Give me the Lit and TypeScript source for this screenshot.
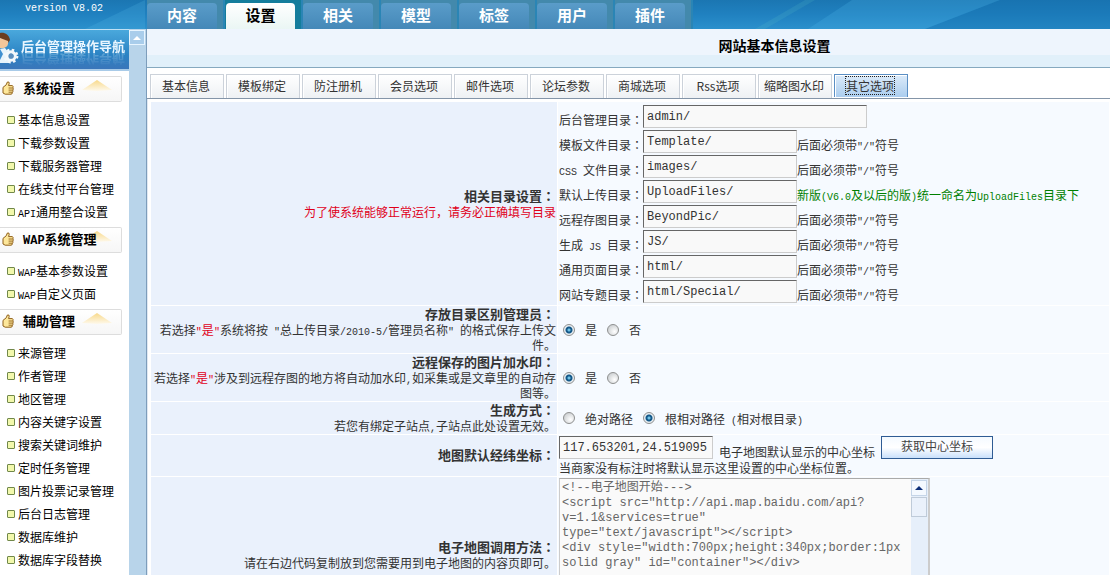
import { LitElement, html, css } from "lit";
import { customElement, property } from "lit/decorators.js";

/** Sets half-width runs and full-width colons in their own faces, so both keep the 6/12 pixel grid. */
const mix = (text: string) =>
  text
    .split(/([\x20-\x7e]+|：)/)
    .filter((p) => p)
    .map((p) =>
      p === "："
        ? html`<span class="colon">：</span>`
        : /^[\x20-\x7e]/.test(p)
          ? html`<span class="half">${p}</span>`
          : p
    );

const shared = css`
  * { box-sizing: border-box; }
  .half { font-family: "Liberation Mono", monospace; font-size: 10px; line-height: 6px; white-space: pre-wrap; }
  .colon { font-family: "Noto Sans CJK TC", sans-serif; line-height: 10px; }
  .bold .half { font-size: 12px; }
  a { color: inherit; text-decoration: none; }
`;

@customElement("admin-header")
export class AdminHeader extends LitElement {
  static styles = [
    shared,
    css`
      :host {
        display: flex; height: 29px; color: #fff; position: relative; overflow: hidden;
        background: linear-gradient(#1b76b2, #2081c0 50%, #2b90cc);
      }
      .shine { position: absolute; inset: 0; width: 100%; height: 100%; }
      .version { width: 147px; padding: 1px 0 0 25px; font: 10px/15px "Liberation Mono", monospace; position: relative; white-space: nowrap; }
      nav { display: flex; position: relative; background: #4389ac; }
      a {
        display: block; height: 26px; margin-top: 3px; border-radius: 4px 4px 0 0; text-align: center;
        font-weight: bold; font-size: 15px; line-height: 23px;
        background: linear-gradient(#5a9cc9, #4488b8);
      }
      .slot { width: 78px; border-right: 2px solid #2a85b5; padding-right: 6px; }
      .on a { color: #000; background: linear-gradient(#fff, #eaf6f4); margin-left: 1px; }
      .on { background: #147d9c; }
    `,
  ];
  render() {
    const tabs = ["内容", "设置", "相关", "模型", "标签", "用户", "插件"];
    return html`
      <svg class="shine" viewBox="0 0 1110 29" preserveAspectRatio="none" aria-hidden="true">
        <path d="M925 29 1000 0H1110V29Z" fill="#1470ae" opacity=".35" />
        <path d="M808 29 852 0H1000L925 29Z" fill="#4bb4e6" opacity=".25" />
        <path d="M755 29 805 0H815L765 29Z" fill="#6cc" opacity=".15" />
        <path d="M85 29 145 0V29Z" fill="#5cc0ea" opacity=".2" />
      </svg>
      <div class="version">version V8.02</div>
      <nav>
        ${tabs.map((t) => html`<div class="slot ${t === "设置" ? "on" : ""}"><a href="#">${t}</a></div>`)}
      </nav>
    `;
  }
}

@customElement("side-menu")
export class SideMenu extends LitElement {
  static styles = [
    shared,
    css`
      :host { display: flex; width: 146px; flex: none; overflow: hidden; background: #b8d4ea; border-right: 1px solid #7d9dbb; }
      .panel { width: 129px; background: #fff; overflow: hidden; }
      .banner {
        height: 42px; display: flex; align-items: flex-start; position: relative; border-top: 1px solid #bfe0f4; overflow: hidden;
        background: linear-gradient(#4aa8dc, #2b83c4 60%, #3a76ba 94%, #a9cbe8 96%);
      }
      .banner svg { flex: none; width: 20px; height: 38px; }
      .banner strong {
        color: #e9f6ff; font-size: 13px; line-height: 15px; margin: 8px 0 0 1px; white-space: nowrap; font-weight: bold;
        -webkit-box-reflect: below -1px linear-gradient(transparent, rgba(0, 0, 0, 0.3));
      }
      h2 {
        display: flex; align-items: center; margin: 0 7px 0 0; height: 26px; font-size: 13px; line-height: 22px; padding-bottom: 2px; color: #000;
        border: 1px solid #ddd; border-left: 0; border-radius: 0 2px 2px 0; background: linear-gradient(#fff, #f6f6f6);
        position: relative;
      }
      h2 .thumb { width: 12px; height: 14px; margin-right: 9px; margin-left: 2px; }
      h2 span { position: relative; z-index: 1; }
      h2 .up { position: absolute; left: 82px; top: 3px; width: 30px; height: 11px; }
      .groups { padding-top: 5px; }
      ul { list-style: none; margin: 0; padding: 6px 0 4px; }
      li { height: 23px; display: flex; align-items: center; white-space: nowrap; font-size: 12px; line-height: 23px; color: #000; }
      li::before { content: ""; width: 6px; height: 6px; border: 1px solid #71884a; border-radius: 1px; background: #f2f8ac; margin: 1px 4px 0 7px; flex: none; }
      li a { margin-left: -1px; }
      .rail { flex: 1; padding-top: 1px; }
      .rail button { display: block; width: 16px; height: 15px; padding: 0; border: 1px solid #e8f5ff; background: #a9cdeb; }
      .rail svg { display: block; margin: auto; }
    `,
  ];
  render() {
    const groups: [string, string[]][] = [
      ["系统设置", ["基本信息设置", "下载参数设置", "下载服务器管理", "在线支付平台管理", "API通用整合设置"]],
      ["WAP系统管理", ["WAP基本参数设置", "WAP自定义页面"]],
      ["辅助管理", ["来源管理", "作者管理", "地区管理", "内容关键字设置", "搜索关键词维护", "定时任务管理", "图片投票记录管理", "后台日志管理", "数据库维护", "数据库字段替换"]],
    ];
    return html`
      <div class="panel">
        <div class="banner">
          <svg viewBox="0 0 20 38" aria-hidden="true">
            <path d="M0 3C4 2 9 4 10 10L8 13 0 8Z" fill="#6b3e1e" />
            <path d="M0 8 8 11C9 16 5 19 0 18Z" fill="#f3c79a" />
            <path d="M0 19 5 18 9 23V33H0Z" fill="#e7f3fb" />
            <path d="M0 19 3 24 0 30Z" fill="#3f8fd0" />
            <circle cx="11" cy="26" r="4.2" fill="none" stroke="#f4f8fb" stroke-width="3.2" />
            <circle cx="11" cy="26" r="6.3" fill="none" stroke="#f4f8fb" stroke-width="2.2" stroke-dasharray="2.5 2.45" />
            <circle cx="11" cy="26" r="2.6" fill="#5d8fbe" />
          </svg>
          <strong>后台管理操作导航</strong>
        </div>
        <div class="groups">
          ${groups.map(
            ([title, items]) => html`
              <h2 class="bold">
                <svg class="thumb" viewBox="0 0 12 14" aria-hidden="true">
                  <path d="M1 6.4 4.2 3.8 5.4 1Q7.4.4 7.2 2.4L6.6 4.6H10.4Q11.6 5.6 10.9 6.9 11.7 8 10.8 9.1 11.4 10.4 10.4 11.2 10.5 13.2 9 13.2H3.2L1 12Z" fill="#fde79a" stroke="#8f5f1a" />
                  <path d="M6.6 7H10.6M6.6 9.1H10.6M6.6 11.2H10.2" stroke="#8f5f1a" stroke-width=".9" />
                </svg>
                <span>${mix(title)}</span>
                <svg class="up" viewBox="0 0 30 11" aria-hidden="true">
                  <defs>
                    <linearGradient id="g" x1="0" y1="0" x2="0" y2="1"><stop offset="0" stop-color="#f8d98a" /><stop offset="1" stop-color="#fef9ec" /></linearGradient>
                  </defs>
                  <path d="M15 0 30 10 15 11 0 10Z" fill="url(#g)" />
                </svg>
              </h2>
              <ul>${items.map((i) => html`<li><a href="#">${mix(i)}</a></li>`)}</ul>
            `
          )}
        </div>
      </div>
      <div class="rail">
        <button aria-label="Scroll up"><svg width="8" height="4" viewBox="0 0 8 4"><path d="M4 0 8 4H0Z" fill="#fff" /></svg></button>
      </div>
    `;
  }
}

@customElement("settings-page")
export class SettingsPage extends LitElement {
  static styles = [
    shared,
    css`
      :host { display: flex; flex-direction: column; flex: 1; min-width: 0; background: #fff; color: #333; }
      h1 {
        margin: 0; height: 39px; flex: none; border-bottom: 1px solid #86a9bf; text-align: center; font-size: 14px; line-height: 32px;
        color: #000; padding-left: 292px; background: linear-gradient(#eef5fd 26px, #e1f0fa 26px);
      }
      .tabs { display: flex; gap: 2px; padding: 6px 0 0 3px; height: 31px; flex: none; border-bottom: 1px solid #8495a8; }
      .tabs button {
        width: 74px; height: 24px; padding: 0 2px 2px 0; font: 12px/16px "Noto Sans CJK SC", sans-serif; color: #333; white-space: nowrap;
        border: 1px solid #ccd2da; border-bottom: 0; background: linear-gradient(#fff, #eef1f4); box-shadow: inset 1px 1px #fff;
      }
      .tabs button.on { height: 23px; padding-bottom: 1px; border-color: #5b8fc4; background: linear-gradient(#dcebfa, #abcdee); }
      .tabs button.on span { outline: 1px dotted #222; }
      .frame { flex: 1; min-height: 0; overflow: hidden; border-left: 1px solid #dfe8f2; padding: 2px 0 0 2px; }
      table { width: 100%; border-collapse: separate; border-spacing: 1px; table-layout: fixed; }
      .name { width: 406px; background: #eaf1fc; text-align: right; font-weight: normal; }
      td { background: #f6faff; }
      th, td { font-size: 12px; line-height: 15px; padding: 1px; vertical-align: middle; }
      strong { display: block; height: 15px; font-size: 13px; line-height: 14px; padding-right: 1px; }
      .red { color: #e0001a; }
      .green { color: #008000; }
      .line { display: flex; align-items: flex-end; height: 25px; white-space: nowrap; }
      .line .half { white-space: pre; }
      .line label { width: 84px; padding-bottom: 3px; flex: none; }
      .line > span { padding-bottom: 3px; }
      .dirs { padding: 3px 1px 0; }
      input[type="text"] {
        width: 154px; height: 23px; margin-bottom: 2px; flex: none; padding: 0 3px; font: 12px/16px "Liberation Mono", monospace; color: #333;
        border: 1px solid #ccc; border-top-color: #666; border-left-color: #666; background: #f9f9f9; outline: 0; border-radius: 0;
      }
      input.wide { width: 224px; }
      .radios { display: flex; align-items: center; white-space: nowrap; }
      .radios label { display: flex; align-items: center; margin-right: 6px; }
      input[type="radio"] {
        appearance: none; width: 12px; height: 12px; margin: 0 10px 0 4px; border: 1px solid #8e8f8f; border-radius: 50%;
        background: radial-gradient(circle at 65% 65%, #fff, #cfd2d4 75%);
      }
      input[type="radio"]:checked { background: radial-gradient(circle at 50% 50%, #6fc2e6 0 1px, #14598a 2px 3px, #e8eef2 4px); }
      .map { display: flex; align-items: flex-end; white-space: nowrap; height: 24px; }
      .map input[type="text"], .get { margin-bottom: 1px; }
      .map > span { padding: 0 6px 1px; }
      .get {
        width: 112px; height: 23px; padding: 0 0 3px; font: 12px/16px "Noto Sans CJK SC", sans-serif; color: #444;
        border: 1px solid #2f5c94; background: linear-gradient(#f4faff, #fff 50%, #c9e0fb);
      }
      .code { display: flex; width: 371px; height: 153px; border: 1px solid #ccc; border-top-color: #aaa; border-right-width: 2px; background: #fafafa; }
      textarea {
        flex: 1; min-width: 0; resize: none; overflow: hidden; border: 0; padding: 2px 0 0 2px; margin: 0; background: #fafafa; color: #666; outline: 0;
        font: 12px/15px "Liberation Mono", "Noto Sans CJK SC", monospace;
      }
      .bar { width: 17px; background: #e6effa; padding-top: 1px; }
      .bar button { display: block; width: 16px; height: 16px; padding: 0; border: 1px solid #c5d5e8; background: #f4f9ff; }
      .bar svg { display: block; margin: auto; }
      .grip { width: 16px; height: 20px; margin-top: 1px; border: 1px solid #bfcbd9; background: #eaf1fb; }
    `,
  ];

  @property() note = '后面必须带"/"符号';

  private radios(name: string, options: string[], on: number) {
    return html`<div class="radios">
      ${options.map((o, i) => html`<label><input type="radio" name=${name} .checked=${i === on} /><span>${mix(o)}</span></label>`)}
    </div>`;
  }

  render() {
    const tabs = ["基本信息", "模板绑定", "防注册机", "会员选项", "邮件选项", "论坛参数", "商城选项", "Rss选项", "缩略图水印", "其它选项"];
    const dirs: [string, string][] = [
      ["后台管理目录：", "admin/"],
      ["模板文件目录：", "Template/"],
      ["CSS 文件目录：", "images/"],
      ["默认上传目录：", "UploadFiles/"],
      ["远程存图目录：", "BeyondPic/"],
      ["生成 JS 目录：", "JS/"],
      ["通用页面目录：", "html/"],
      ["网站专题目录：", "html/Special/"],
    ];
    const code = `<!--电子地图开始--->
<script src="http://api.map.baidu.com/api?v=1.1&services=true"
type="text/javascript"></` + `script>
<div style="width:700px;height:340px;border:1px solid gray" id="container"></div>`;
    return html`
      <h1>网站基本信息设置</h1>
      <div class="tabs">
        ${tabs.map((t, i) => html`<button class=${i === 9 ? "on" : ""}><span>${t}</span></button>`)}
      </div>
      <div class="frame">
        <table>
          <tr>
            <th class="name"><strong>${mix("相关目录设置：")}</strong><span class="red">为了使系统能够正常运行，请务必正确填写目录</span></th>
            <td class="dirs">
              ${dirs.map(
                ([label, value], i) => html`<div class="line">
                  <label for="dir${i}">${mix(label)}</label>
                  <input type="text" id="dir${i}" class=${i === 0 ? "wide" : ""} .value=${value} />
                  ${i === 0
                    ? ""
                    : i === 3
                      ? html`<span class="green">${mix("新版(V6.0及以后的版)统一命名为UploadFiles目录下")}</span>`
                      : html`<span>${mix(this.note)}</span>`}
                </div>`
              )}
            </td>
          </tr>
          <tr>
            <th class="name"><strong>${mix("存放目录区别管理员：")}</strong>${mix("若选择")}<span class="red">${mix('"是"')}</span>${mix('系统将按 "总上传目录/2010-5/管理员名称" 的格式保存上传文件。')}</th>
            <td>${this.radios("admin", ["是", "否"], 0)}</td>
          </tr>
          <tr>
            <th class="name"><strong>${mix("远程保存的图片加水印：")}</strong>${mix("若选择")}<span class="red">${mix('"是"')}</span>${mix("涉及到远程存图的地方将自动加水印,如采集或是文章里的自动存图等。")}</th>
            <td>${this.radios("mark", ["是", "否"], 0)}</td>
          </tr>
          <tr>
            <th class="name"><strong>${mix("生成方式：")}</strong>${mix("若您有绑定子站点,子站点此处设置无效。")}</th>
            <td>${this.radios("path", ["绝对路径", "根相对路径 (相对根目录)"], 1)}</td>
          </tr>
          <tr>
            <th class="name"><strong>${mix("地图默认经纬坐标：")}</strong></th>
            <td>
              <div class="map">
                <input type="text" aria-label="地图默认经纬坐标" .value=${"117.653201,24.519095"} />
                <span>电子地图默认显示的中心坐标</span>
                <button class="get">获取中心坐标</button>
              </div>
              当商家没有标注时将默认显示这里设置的中心坐标位置。
            </td>
          </tr>
          <tr>
            <th class="name"><strong>${mix("电子地图调用方法：")}</strong>请在右边代码复制放到您需要用到电子地图的内容页即可。</th>
            <td>
              <div class="code">
                <textarea aria-label="电子地图调用方法" .value=${code}></textarea>
                <div class="bar">
                  <button aria-label="Scroll up"><svg width="8" height="4" viewBox="0 0 8 4"><path d="M4 0 8 4H0Z" fill="#0d2f7a" /></svg></button>
                  <div class="grip"></div>
                </div>
              </div>
            </td>
          </tr>
        </table>
      </div>
    `;
  }
}

@customElement("app-root")
export class AppRoot extends LitElement {
  static styles = css`
    :host { display: flex; flex-direction: column; height: 100vh; overflow: hidden; font-family: "Noto Sans CJK SC", sans-serif; font-size: 12px; }
    .body { display: flex; flex: 1; min-height: 0; }
  `;
  render() {
    return html`<admin-header></admin-header>
      <div class="body"><side-menu></side-menu><settings-page></settings-page></div>`;
  }
}
